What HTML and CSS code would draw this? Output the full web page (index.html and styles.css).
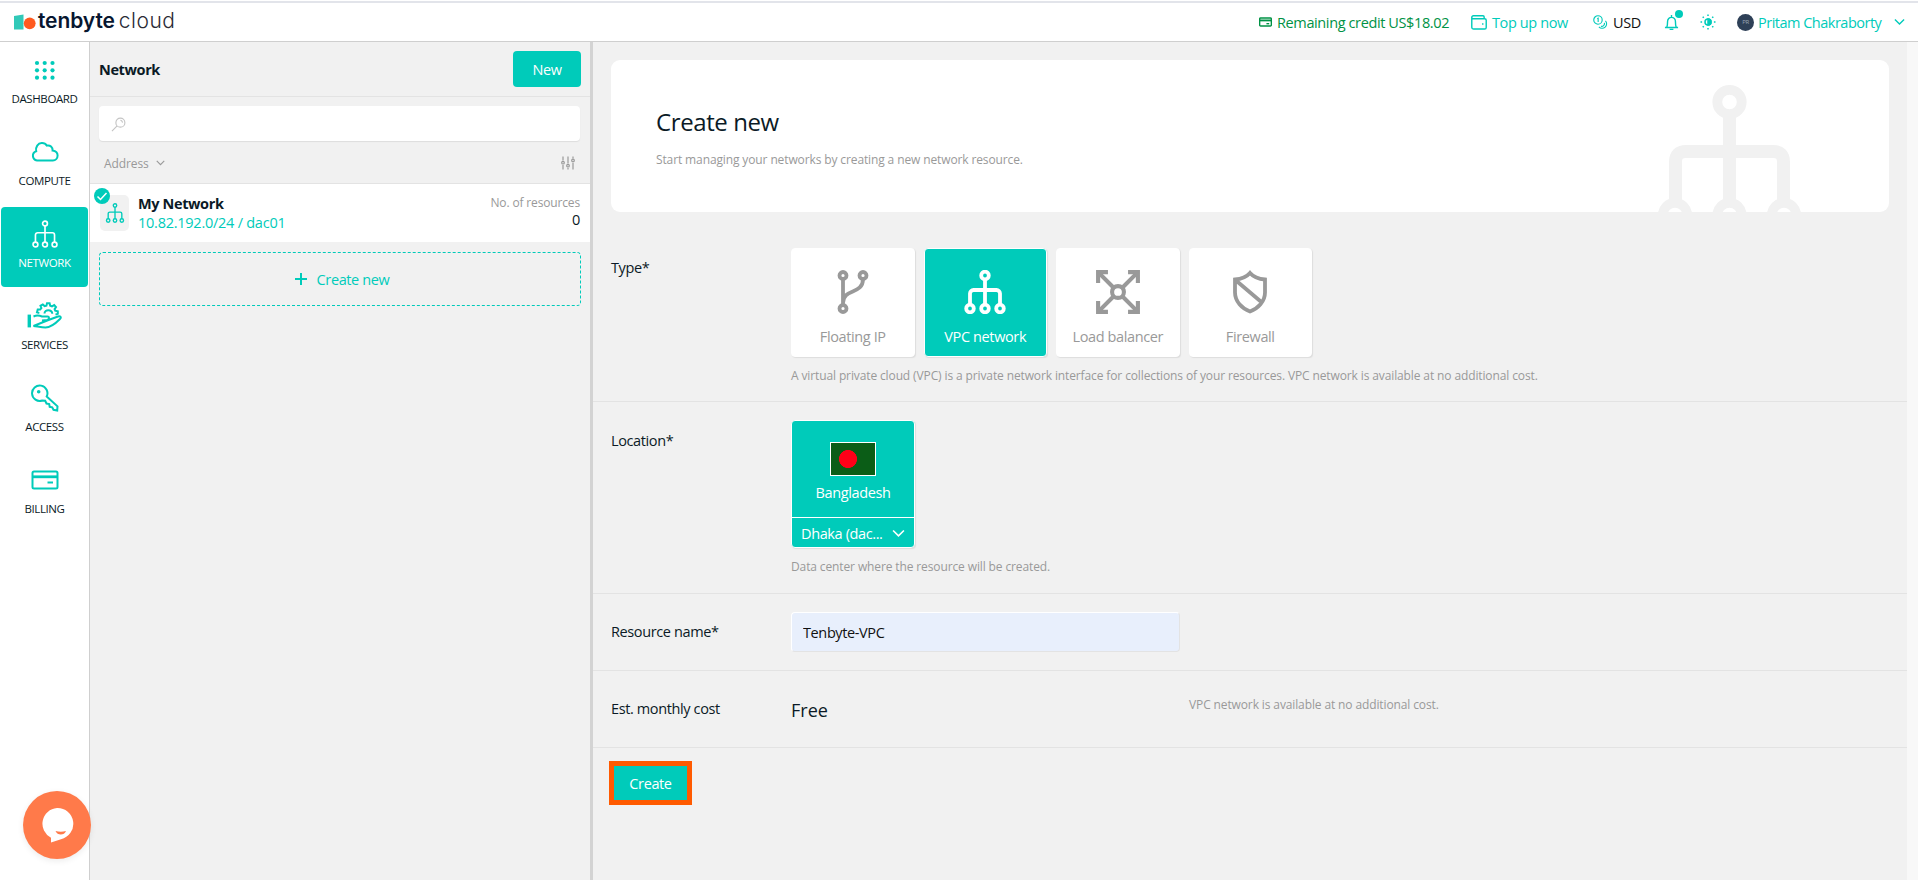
FILE: index.html
```html
<!DOCTYPE html>
<html lang="en">
<head>
  <meta charset="UTF-8"/>
  <meta name="viewport" content="width=device-width, initial-scale=1"/>
  <title>Create new network</title>
  <link rel="stylesheet" href="styles.css">
</head>
<body>

  <!-- shared icons -->
  <svg class="sprite" xmlns="http://www.w3.org/2000/svg">
    <symbol id="i-vpc" viewBox="0 0 40 44">
      <circle cx="20" cy="5.5" r="3.8"/>
      <circle cx="5" cy="38.5" r="3.8"/>
      <circle cx="20" cy="38.5" r="3.8"/>
      <circle cx="35" cy="38.5" r="3.8"/>
      <path d="M20 9.3V34.7M5 34.7V23.5a3.5 3.5 0 0 1 3.5-3.5h23a3.5 3.5 0 0 1 3.5 3.5V34.7"/>
    </symbol>
    <symbol id="i-down" viewBox="0 0 12 8">
      <path d="M1 1.2l5 5 5-5"/>
    </symbol>
  </svg>

  <header class="topbar">
    <a class="logo">
      <svg viewBox="0 0 22 17"><path d="M0 2L9.500 .5V15.500H0z" fill="#31c9b8"/><circle cx="15.700" cy="9.300" r="5.900" fill="#ff5a1f"/></svg>
      <b>tenbyte</b><span>cloud</span>
    </a>
    <div class="tools">
      <span class="credit">
        <svg viewBox="0 0 14 10"><rect x=".7" y=".7" width="12.6" height="8.6" rx="1"/><path d="M1 3.3h12" stroke-width="2"/><path d="M8 6.8h3"/></svg>
        <span class="t">Remaining credit US$18.02</span>
      </span>
      <span class="topup">
        <svg viewBox="0 0 17 16"><path d="M14 4V2a1.200 1.200 0 0 0-1.200-1.200H2.500A1.700 1.700 0 0 0 .8 2.500V13a2 2 0 0 0 2 2h11.700a1.700 1.700 0 0 0 1.700-1.700V5.700A1.700 1.700 0 0 0 14.500 4H2.500A1.500 1.500 0 0 1 .8 2.500"/><path d="M12.500 8.700v1.800"/></svg>
        <span class="t">Top up now</span>
      </span>
      <span class="currency">
        <svg viewBox="0 0 16 16"><circle cx="5.300" cy="5.300" r="4.500"/><path d="M4.500 4l1-.6v4"/><path d="M13.300 6.300a4.600 4.600 0 1 1-7 6.300"/><path d="M12.200 8.500a3 3 0 0 1-3.700 3.500"/></svg>
        <span class="t">USD</span>
      </span>
      <span class="bell">
        <svg viewBox="0 0 16 18"><path d="M1 14.300h14M3 14c.8-2 .8-4 .8-6a4.200 4.500 0 0 1 8.400 0c0 2 0 4 .8 6M8 3V1M6 16.300h4"/></svg>
        <i class="dot"></i>
      </span>
      <span class="theme">
        <svg viewBox="0 0 16 16"><circle cx="8" cy="8" r="3"/><path d="M8 5a3 3 0 0 1 0 6z" fill="currentColor"/><path d="M8 .5v1.600M8 13.900v1.600M.5 8h1.600M13.900 8h1.600M2.700 2.700l1.100 1.100M12.200 12.200l1.100 1.100M2.700 13.300l1.100-1.100M12.200 3.800l1.100-1.100"/></svg>
      </span>
      <span class="user">
        <i class="avatar">PR</i>
        <span class="t">Pritam Chakraborty</span>
        <svg><use href="#i-down"/></svg>
      </span>
    </div>
  </header>

  <div class="layout">
    <nav class="sidebar">
      <a>
        <svg viewBox="0 0 28 28"><g fill="currentColor" stroke="none"><circle cx="6" cy="7" r="2.100"/><circle cx="13.700" cy="7" r="2.100"/><circle cx="21.500" cy="7" r="2.100"/><circle cx="6" cy="14.300" r="2.100"/><circle cx="13.700" cy="14.300" r="2.100"/><circle cx="21.500" cy="14.300" r="2.100"/><circle cx="6" cy="21.700" r="2.100"/><circle cx="13.700" cy="21.700" r="2.100"/><circle cx="21.500" cy="21.700" r="2.100"/></g></svg>
        <span>DASHBOARD</span>
      </a>
      <a>
        <svg viewBox="0 0 28 28"><path d="M6 22.500a4.800 4.800 0 0 1-.8-9.300C4.300 9 7 5.200 10.700 5c2.500-.1 4.200 1 5.200 2.600 3.200-.8 6 1.700 5.700 5 2.900.5 5 2.300 5 5 0 2.800-2.100 4.900-4.700 4.900z"/></svg>
        <span>COMPUTE</span>
      </a>
      <a class="active">
        <svg><use href="#i-vpc"/></svg>
        <span>NETWORK</span>
      </a>
      <a>
        <svg viewBox="0 0 36 28" class="wide"><rect x="1.500" y="13.500" width="1.600" height="11" stroke-width="1.800"/><path d="M6.500 14.500c3.500-1.500 6-1 8.500 0h5.500c2 0 2 3-.5 3.500l-5 .6M21.500 18l9.500-3.500c2.500-.7 3.800 1 2 2.500-4 4-9 8.500-14.500 8.500-4 0-8-1-12-1.500z"/><path d="M12 11.500c-.4-.8-1-1-2-1.300l.7-2.700 2.500.1 1.200-1.500L13.500 3.800l2.300-1.300 1.800 1.600 1.800-.4.600-2.400h2.600l.6 2.400 1.800.7 2.200-1.300 1.800 1.900-1.400 2.100.6 1.500 2.600.7v2.500l-2.300.8"/><path d="M17.500 11.500c0-4.500 7.500-4.500 7.800.2"/></svg>
        <span>SERVICES</span>
      </a>
      <a>
        <svg viewBox="0 0 28 28"><path d="M15.700 12.500a7.700 7.700 0 1 0-4.500 4l3 .3 1.300 2.700 2.700.5.500 2.800 2.500.5 1.300 2.500 3.700.7.300-4.200z"/><circle cx="7.700" cy="7.700" r=".8" fill="currentColor"/></svg>
        <span>ACCESS</span>
      </a>
      <a>
        <svg viewBox="0 0 28 28"><rect x="1.500" y="5.500" width="25" height="17" rx="1.500"/><path d="M1.500 10.800h25" stroke-width="2.800"/><path d="M16.500 16.500h5.500"/></svg>
        <span>BILLING</span>
      </a>
    </nav>

    <section class="panel">
      <div class="panel-head">
        <h2>Network</h2>
        <button class="btn">New</button>
      </div>
      <div class="filter">
        <div class="search">
          <svg viewBox="0 0 16 16"><circle cx="10" cy="6" r="4.800"/><path d="M6.500 9.500L1 15M10 3.500a2.300 2.300 0 0 1 2.200 2.500"/></svg>
        </div>
        <div class="sort">
          <span>Address</span>
          <svg class="caret"><use href="#i-down"/></svg>
          <svg class="sliders" viewBox="0 0 14 14"><path d="M2 .5v4M2 9v4.500M7 .5v7M7 12v1.500M12 .5v2M12 7v6.500"/><circle cx="2" cy="6.700" r="1.300"/><circle cx="7" cy="9.700" r="1.300"/><circle cx="12" cy="4.500" r="1.300"/></svg>
        </div>
      </div>
      <div class="item">
        <div class="thumb">
          <svg><use href="#i-vpc"/></svg>
          <i class="check"><svg viewBox="0 0 16 16"><path d="M3.500 8.500l3 3 6-6.500"/></svg></i>
        </div>
        <div class="item-main">
          <b>My Network</b>
          <span>10.82.192.0/24 / dac01</span>
        </div>
        <div class="item-side">
          <small>No. of resources</small>
          <span>0</span>
        </div>
      </div>
      <a class="add">
        <svg viewBox="0 0 12 12"><path d="M6 0v12M0 6h12"/></svg>
        <span>Create new</span>
      </a>
    </section>

    <main class="content">
      <div class="banner">
        <h1>Create new</h1>
        <p class="hint">Start managing your networks by creating a new network resource.</p>
        <svg class="watermark" viewBox="0 0 150 130">
          <g stroke-width="9.800"><circle cx="74.500" cy="20" r="12.200"/><circle cx="20" cy="133" r="12.200"/><circle cx="74.500" cy="133" r="12.200"/><circle cx="129" cy="133" r="12.200"/></g>
          <path d="M74.500 35V118M20.500 118V80q0-10.500 10.500-10.500H118q10.500 0 10.500 10.500V118"/>
        </svg>
      </div>

      <div class="row row-type">
        <label>Type*</label>
        <div>
          <div class="types">
            <div class="type">
              <svg viewBox="0 0 44 44"><circle cx="12" cy="5.500" r="3.500"/><circle cx="32" cy="5.500" r="3.500"/><circle cx="12" cy="38.500" r="3.500"/><path d="M12 9v26M32 9c0 16-20 9-20 24"/></svg>
              <span>Floating IP</span>
            </div>
            <div class="type selected">
              <svg><use href="#i-vpc"/></svg>
              <span>VPC network</span>
            </div>
            <div class="type balancer">
              <svg viewBox="0 0 46 46"><circle cx="23" cy="23" r="6.200"/><path d="M18.500 18.500L3 3M27.500 18.500L43 3M18.500 27.500L3 43M27.500 27.500L43 43"/><path d="M12.500 2.200H2.200V13.500M33.500 2.200H43.800V13.500M12.500 43.800H2.200V32.500M33.500 43.800H43.800V32.500"/></svg>
              <span>Load balancer</span>
            </div>
            <div class="type">
              <svg viewBox="0 0 44 44"><path d="M22 3c3.500 4 8 6 15 6.500v13c0 9-7 16-15 19C14 38.500 7 31.500 7 22.500V9.500C14 9 18.500 7 22 3zM8 10.500L34.500 33"/></svg>
              <span>Firewall</span>
            </div>
          </div>
          <p class="hint">A virtual private cloud (VPC) is a private network interface for collections of your resources. VPC network is available at no additional cost.</p>
        </div>
      </div>

      <div class="row row-location">
        <label>Location*</label>
        <div>
          <div class="location">
            <div class="country">
              <i class="flag"></i>
              <span>Bangladesh</span>
            </div>
            <div class="city">
              <span>Dhaka (dac...</span>
              <svg><use href="#i-down"/></svg>
            </div>
          </div>
          <p class="hint">Data center where the resource will be created.</p>
        </div>
      </div>

      <div class="row row-name">
        <label>Resource name*</label>
        <input type="text" value="Tenbyte-VPC">
      </div>

      <div class="row row-cost">
        <label>Est. monthly cost</label>
        <span class="price">Free</span>
        <p class="hint">VPC network is available at no additional cost.</p>
      </div>

      <button class="btn create">Create</button>
    </main>
  </div>

  <div class="chat">
    <svg viewBox="0 0 34 36"><path d="M17 1a15.800 15.800 0 0 1 4 31.200L11 35.500V30.800A15.800 15.800 0 0 1 17 1z" fill="#fff"/><path d="M15.500 24c3.500 1 7 1 10.500 0-1.500 4.500-8.500 5-10.500 0z" fill="#ff7a4a"/></svg>
  </div>

</body>
</html>
```
FILE: styles.css
```css
/* --- Reset & Body --- */
* { box-sizing: border-box; margin: 0; padding: 0; }
html, body { width: 100%; height: 100%; overflow: hidden; }
body {
  display: flex; flex-direction: column;
  background: #fff;
  color: #0b1a26;
  font-family: "Open Sans", "Noto Sans", sans-serif;
  font-size: 14.5px;
  line-height: 20px;
  letter-spacing: -0.38px;
  white-space: nowrap;
}
svg { display: block; flex: none; fill: none; stroke: currentColor; stroke-width: 1.5; }
i { font-style: normal; }
.sprite { position: absolute; width: 0; height: 0; }

/* --- Top bar --- */
.topbar {
  flex: none;
  display: flex; align-items: center; justify-content: space-between;
  height: 42px;
  padding: 3px 13px 0 14px;
  border-bottom: 1px solid #cfcfcf;
  background: linear-gradient(#fff 1px, #e2e4ea 1px, #e2e4ea 3px, #fff 3px);
}
.logo { display: flex; align-items: center; height: 34px; font-family: Inter, sans-serif; font-size: 21px; color: #071630; }
.logo svg { width: 22px; height: 17px; stroke: none; margin-right: 2px; }
.logo b { font-weight: 600; letter-spacing: -0.1px; margin: -2px 4px 0 0; }
.logo span { letter-spacing: 0.5px; color: #2b2b36; margin-top: -2px; font-weight: 300; }
.tools { display: flex; align-items: center; color: #00cbba; }
.tools > span { display: flex; align-items: center; }
.tools .t { padding-top: 1px; }
.credit { color: #009245; width: 212px; }
.credit svg { width: 13px; height: 10px; margin-right: 5px; }
.topup { width: 122px; }
.topup svg { width: 16px; height: 15px; margin-right: 5px; }
.currency { width: 71px; }
.currency svg { width: 15px; height: 15px; margin-right: 5px; stroke-width: 1.2; }
.currency .t { color: #111; }
.bell { position: relative; width: 36px; }
.bell svg { width: 15px; height: 17px; }
.bell .dot { position: absolute; left: 11px; top: -4px; width: 8px; height: 8px; border-radius: 50%; background: #00cbba; }
.theme { width: 37px; }
.theme svg { width: 16px; height: 16px; }
.avatar { width: 17px; height: 17px; margin-right: 4px; border-radius: 50%; background: #2e4057; color: #9aa5b3; font-size: 6px; line-height: 17px; text-align: center; }
.user .t { width: 136px; letter-spacing: -0.5px; }
.user svg { width: 11px; height: 8px; }

.layout { flex: 1; display: flex; min-height: 0; }

/* --- Sidebar --- */
.sidebar {
  flex: none; width: 90px;
  padding: 1px 1px 0;
  border-right: 1px solid #cfcfcf;
  font-size: 11.5px;
  letter-spacing: -0.4px;
}
.sidebar a {
  display: flex; flex-direction: column; align-items: center;
  height: 80px; margin-bottom: 2px; padding-top: 13px;
  border-radius: 4px;
  color: #00cbba;
}
.sidebar svg { width: 28px; height: 28px; stroke-width: 2; margin-bottom: 5px; }
.sidebar .wide { width: 36px; }
.sidebar span { color: #0b1a26; }
.sidebar .active { background: #00cbba; color: #fff; }
.sidebar .active svg { stroke-width: 2.6; }
.sidebar .active span { color: #fff; }

/* --- Resource list --- */
.panel { flex: none; width: 503px; border-right: 3px solid #d3d3d3; background: #f1f1f1; }
.panel-head {
  display: flex; align-items: center; justify-content: space-between;
  height: 55px; padding: 0 9px;
  border-bottom: 1px solid #e3e3e3;
}
.panel-head h2 { padding-top: 1px; font-size: 14.5px; }
.btn {
  width: 68px; height: 36px; padding-top: 1px;
  border: 0; border-radius: 4px;
  background: #00cbba; color: #fff;
  font: inherit; letter-spacing: inherit;
}
.filter { height: 87px; padding: 9px 10px 0 9px; border-bottom: 1px solid #e3e3e3; }
.search { height: 35px; padding: 11px 12px; border-radius: 4px; background: #fff; box-shadow: 0 1px 1px #ddd; color: #c4c4c4; }
.search svg { width: 15px; height: 15px; stroke-width: 1.2; }
.sort { display: flex; align-items: center; height: 42px; padding: 2px 5px 0; color: #999; font-size: 12px; letter-spacing: -0.1px; }
.sort span { padding-top: 1px; }
.caret { width: 9px; height: 6px; margin-left: 7px; }
.sliders { width: 14px; height: 14px; margin-left: auto; stroke-width: 1.2; }
.item { display: flex; align-items: center; height: 58px; padding: 0 10px; background: #fff; }
.thumb {
  position: relative;
  display: flex; align-items: center; justify-content: center;
  width: 29px; height: 36px; margin-right: 9px;
  border-radius: 5px;
  background: #f1f1f1; color: #00cbba;
}
.thumb > svg { width: 20px; height: 20px; stroke-width: 3; }
.check { position: absolute; left: -6px; top: -7px; width: 16px; height: 16px; border-radius: 50%; background: #00cbba; color: #fff; }
.item-main { display: flex; flex-direction: column; line-height: 19px; }
.item-main span { color: #00cbba; letter-spacing: -0.25px; }
.item-side { display: flex; flex-direction: column; margin: -4px 0 0 auto; text-align: right; line-height: 17px; }
.item-side small { color: #999; font-size: 12px; letter-spacing: -0.15px; }
.add {
  display: flex; align-items: center; justify-content: center; gap: 10px;
  height: 54px; margin: 10px 9px; padding-left: 4px;
  border: 1px dashed #00cbba; border-radius: 4px;
  color: #00cbba;
}
.add span { padding-top: 2px; }
.add svg { width: 12px; height: 12px; stroke-width: 2; }

/* --- Create form --- */
.content { flex: 1; border-right: 11px solid #f8f8f8; background: #f1f1f1; }
.hint { color: #999; font-size: 12px; letter-spacing: -0.12px; line-height: 16px; }
.banner {
  position: relative; overflow: hidden;
  height: 152px; margin: 18px 18px 36px;
  padding: 46px 45px;
  border-radius: 9px;
  background: #fff;
}
.banner h1 { margin-bottom: 14px; font-size: 24px; font-weight: 400; line-height: 32px; letter-spacing: -0.4px; }
.watermark { position: absolute; right: 84px; top: 22px; width: 150px; height: 130px; color: #f1f1f1; stroke-width: 13; }
.row { display: flex; padding: 0 18px; border-bottom: 1px solid #e3e3e3; }
.row label { flex: none; width: 180px; }
.row-type { height: 154px; }
.row-type label { margin-top: 10px; }
.types { display: flex; gap: 9px; }
.type {
  display: flex; flex-direction: column; align-items: center;
  width: 123.5px; height: 109px; padding-top: 21px;
  border: 1px solid #fff; border-radius: 4px;
  background: #fff; color: #999;
  box-shadow: 1px 1px 1px #ddd;
}
.type svg { width: 44px; height: 44px; margin-bottom: 13px; stroke-width: 3.8; }
.type.balancer svg { width: 46px; stroke-width: 4.3; }
.type.selected { background: #00cbba; color: #fff; }
.types + .hint, .location + .hint { margin-top: 11px; }
.row-location { height: 192px; padding-top: 18px; }
.row-location label { margin-top: 11px; }
.location { width: 124px; height: 128px; border: 1px solid #fff; border-radius: 4px; background: #00cbba; color: #fff; box-shadow: 1px 1px 1px #ddd; }
.country { display: flex; flex-direction: column; align-items: center; height: 97px; padding-top: 21px; border-bottom: 1px solid #fff; }
.flag { width: 46px; height: 34px; margin-bottom: 7px; border: 1px solid #fff; background: radial-gradient(circle at 17px 16px, #ff0018 8.7px, #0b5d17 9.3px); }
.city { display: flex; align-items: center; justify-content: space-between; height: 30px; padding: 1px 9px 0; }
.city svg { width: 13px; height: 9px; }
.row-name { height: 77px; padding-top: 18px; }
.row-name label { margin-top: 10px; }
.row-name input {
  width: 389px; height: 40px; padding: 0 11px;
  border: 1px solid #fff; border-right-color: #e3e3e3; border-bottom-color: #e3e3e3; border-radius: 4px;
  background: #e8effc; color: #111;
  font: inherit; letter-spacing: inherit;
}
.row-cost { height: 77px; padding-top: 28px; }
.row-cost .hint { margin-top: -2px; }
.price { width: 398px; font-size: 18px; line-height: 22px; letter-spacing: 0; }
.create { width: 83px; height: 44px; margin: 13px 0 0 16px; border: 5px solid #ff5a00; border-radius: 0; }

/* --- Chat launcher --- */
.chat {
  position: absolute; left: 23px; bottom: 21px;
  display: flex; align-items: center; justify-content: center;
  width: 68px; height: 68px;
  border-radius: 50%;
  background: #ff7a4a;
  box-shadow: 0 2px 6px rgba(0,0,0,0.08);
}
.chat svg { width: 34px; height: 36px; stroke: none; }
```
